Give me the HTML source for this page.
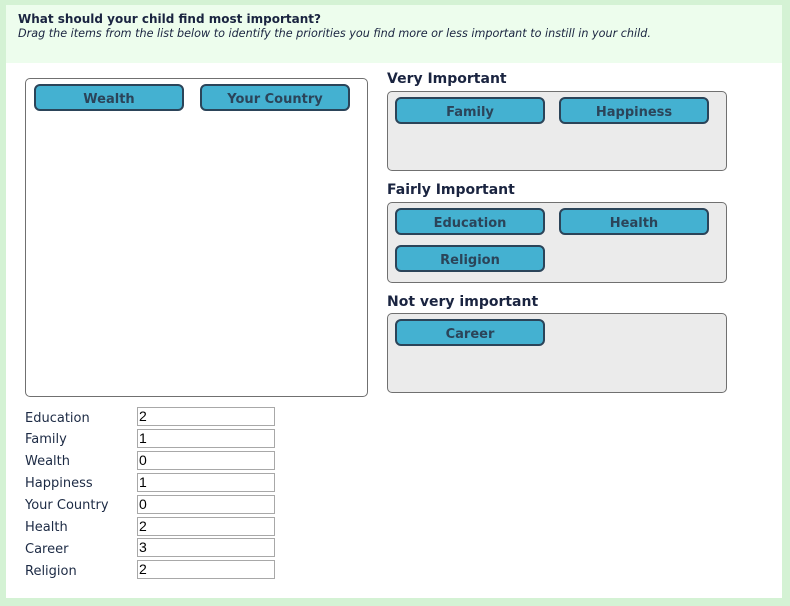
<!DOCTYPE html>
<html><head><meta charset="utf-8"><style>
*{margin:0;padding:0;box-sizing:border-box}
body{width:790px;height:606px;background:#d4f2d4;font-family:"DejaVu Sans","Liberation Sans",sans-serif;color:#1c2a44;position:relative;overflow:hidden}
.panel{position:absolute;left:6px;top:5px;width:776px;height:593px;background:#fff}
.hdr{position:absolute;left:6px;top:5px;width:776px;height:58px;background:#edfded}
.t1{position:absolute;left:18px;top:12px;font-size:12px;font-weight:bold;color:#1a2440}
.t2{position:absolute;left:18px;top:27px;font-size:11.2px;font-style:italic;color:#1a2440}
.box{position:absolute;border:1px solid #707070;border-radius:5px}
.btn{position:absolute;width:150px;height:27px;background:#44b1d1;border:2px solid #2b4459;border-radius:6px;font-weight:bold;font-size:13px;color:#2b4459;text-align:center;line-height:27px}
.lbl{position:absolute;left:387px;font-size:14px;font-weight:bold;color:#1a2440}
.rl{position:absolute;left:25px;font-size:13px;color:#1c2a44}
.in{position:absolute;left:137px;width:138px;height:19px;border:1px solid #a8a8a8;font-family:"Liberation Sans",sans-serif;font-size:14px;color:#000;line-height:17px;padding-left:1px}
</style></head><body>
<div class="panel"></div>
<div class="hdr"></div>
<div class="t1">What should your child find most important?</div>
<div class="t2">Drag the items from the list below to identify the priorities you find more or less important to instill in your child.</div>

<div class="box" style="left:25px;top:78px;width:343px;height:319px"></div>
<div class="btn" style="left:34px;top:84px">Wealth</div>
<div class="btn" style="left:200px;top:84px">Your Country</div>

<div class="lbl" style="top:71px">Very Important</div>
<div class="box" style="left:387px;top:91px;width:340px;height:80px;background:#ebebeb"></div>
<div class="btn" style="left:395px;top:97px">Family</div>
<div class="btn" style="left:559px;top:97px">Happiness</div>

<div class="lbl" style="top:182px">Fairly Important</div>
<div class="box" style="left:387px;top:202px;width:340px;height:81px;background:#ebebeb"></div>
<div class="btn" style="left:395px;top:208px">Education</div>
<div class="btn" style="left:559px;top:208px">Health</div>
<div class="btn" style="left:395px;top:245px">Religion</div>

<div class="lbl" style="top:294px">Not very important</div>
<div class="box" style="left:387px;top:313px;width:340px;height:80px;background:#ebebeb"></div>
<div class="btn" style="left:395px;top:319px">Career</div>

<div class="rl" style="top:411px">Education</div><div class="in" style="top:407px">2</div>
<div class="rl" style="top:432px">Family</div><div class="in" style="top:429px">1</div>
<div class="rl" style="top:454px">Wealth</div><div class="in" style="top:451px">0</div>
<div class="rl" style="top:476px">Happiness</div><div class="in" style="top:473px">1</div>
<div class="rl" style="top:498px">Your Country</div><div class="in" style="top:495px">0</div>
<div class="rl" style="top:520px">Health</div><div class="in" style="top:517px">2</div>
<div class="rl" style="top:542px">Career</div><div class="in" style="top:538px">3</div>
<div class="rl" style="top:564px">Religion</div><div class="in" style="top:560px">2</div>
</body></html>
